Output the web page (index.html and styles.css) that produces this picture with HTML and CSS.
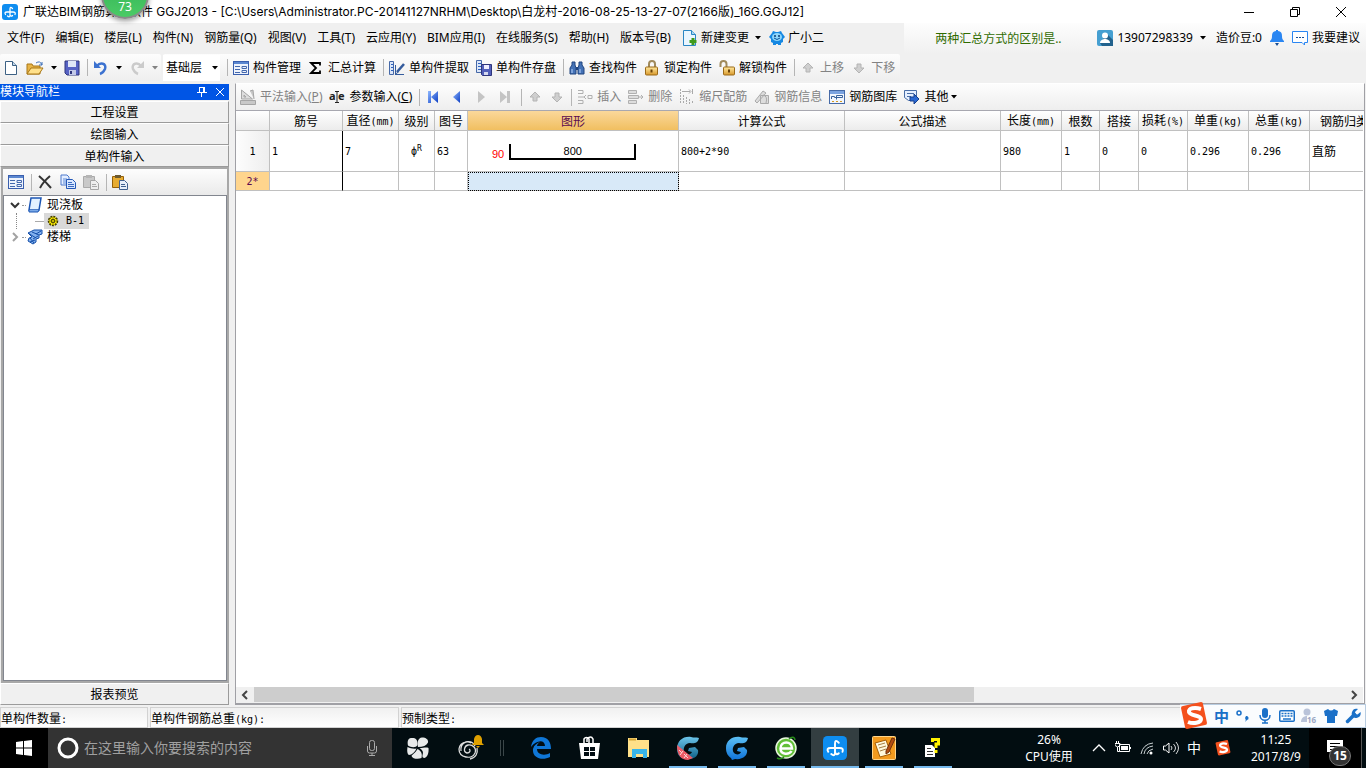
FILE: index.html
```html
<!DOCTYPE html>
<html lang="zh-CN">
<head>
<meta charset="utf-8">
<title>广联达BIM钢筋算量软件 GGJ2013</title>
<link rel="stylesheet" href="styles.css">
</head>
<body>
<svg class="defs" aria-hidden="true">
  <defs>
    <linearGradient id="gBlue" x1="0" y1="0" x2="1" y2="1"><stop offset="0" stop-color="#8fb8ff"/><stop offset="1" stop-color="#0d3fc4"/></linearGradient>
    <linearGradient id="gGold" x1="0" y1="0" x2="0" y2="1"><stop offset="0" stop-color="#ffe9a0"/><stop offset="1" stop-color="#d9982a"/></linearGradient>
    <linearGradient id="gSwirl" x1="0" y1="0" x2="0" y2="1"><stop offset="0" stop-color="#5cc0f5"/><stop offset="1" stop-color="#0f72d8"/></linearGradient>
    <linearGradient id="gTeal" x1="0" y1="0" x2="0" y2="1"><stop offset="0" stop-color="#6cc4ea"/><stop offset="1" stop-color="#0d5f86"/></linearGradient>
    <symbol id="logo" viewBox="0 0 16 16"><rect width="16" height="16" rx="3" fill="#0e8df0"/><path d="M10.500 4.500Q8 2 8 5v6q0 3-2.500 1M3.500 10.500Q2 8 5 8h6q3 0 2 2.500M10.500 11.500Q9 13 8 11" fill="none" stroke="#fff" stroke-width="1.300" stroke-linecap="round"/></symbol>
    <symbol id="form" viewBox="0 0 16 16"><rect x=".5" y="1.500" width="15" height="13" fill="#eef3fc" stroke="#3a5fae"/><path d="M1 3h14" stroke="#5b87d0" stroke-width="2"/><path d="M2 6.500h5M2 9.500h5M2 12.500h5" stroke="#4468ad"/><path d="M9 6.500h4.500v2H9zM9 10.500h4.500v2H9z" fill="none" stroke="#4468ad"/></symbol>
    <symbol id="up" viewBox="0 0 16 16"><path d="M8 3l5 5h-3v4H6V8H3z" fill="#cfcfcf" stroke="#b4b4b4"/></symbol>
    <symbol id="down" viewBox="0 0 16 16"><path d="M8 13l5-5h-3V4H6v4H3z" fill="#cfcfcf" stroke="#b4b4b4"/></symbol>
    <symbol id="caret" viewBox="0 0 6 4"><path d="M0 0h6L3 3.500z" fill="currentColor"/></symbol>
    <symbol id="lock" viewBox="0 0 16 16"><path d="M5 8V4a3 3 0 0 1 6 0v4" fill="none" stroke="#a08a5c" stroke-width="2"/><rect x="1.500" y="7" width="12" height="8" rx="1" fill="url(#gGold)" stroke="#9b6a18"/><path d="M7.500 9.500v3" stroke="#6a4208" stroke-width="2"/></symbol>
    <symbol id="copy" viewBox="0 0 16 16"><path d="M1 1h6l2 2v8H1z" fill="#e4eeff" stroke="#4c79cc"/><path d="M3 5h4M3 7h4M3 9h3" stroke="#5d89d6"/><path d="M6.500 5.500h6l3 3v6h-9z" fill="#d8e7ff" stroke="#2559b7"/><path d="M8 8.500h4M8 10.500h6M8 12.500h6" stroke="#3c6bc0"/></symbol>
    <symbol id="sogou" viewBox="0 0 28 28"><path d="M1 6Q1 4 3 4L21 0q2 0 2 2l4 19q0 2-2 2L7 27q-2 0-2-2z" fill="#f4511e"/><path d="M21 7C15 5 8 6 9 10s12 3 12 7-8 5-13 3" fill="none" stroke="#fff" stroke-width="4"/></symbol>
  </defs>
</svg>

<div class="app">
  <header class="titlebar">
    <svg class="ic16" viewBox="0 0 16 16"><use href="#logo"/></svg>
    <h1 class="title">广联达BIM钢筋算量软件 GGJ2013 - [C:\Users\Administrator.PC-20141127NRHM\Desktop\白龙村-2016-08-25-13-27-07(2166版)_16G.GGJ12]</h1>
    <div class="winctl">
      <button aria-label="最小化"><svg class="ic12" viewBox="0 0 12 12"><path d="M1 6.500h10" stroke="#000"/></svg></button>
      <button aria-label="还原"><svg class="ic12" viewBox="0 0 12 12"><path d="M1.500 3.500h7v7h-7zM3.500 3V1.500h7v7H9" fill="none" stroke="#000"/></svg></button>
      <button aria-label="关闭"><svg class="ic12" viewBox="0 0 12 12"><path d="M1 1l10 10M11 1L1 11" stroke="#000"/></svg></button>
    </div>
    <div class="orb"><span>73</span></div>
  </header>

  <nav class="menubar">
    <div class="menus">
      <button>文件(F)</button><button>编辑(E)</button><button>楼层(L)</button><button>构件(N)</button><button>钢筋量(Q)</button><button>视图(V)</button><button>工具(T)</button><button>云应用(Y)</button><button>BIM应用(I)</button><button>在线服务(S)</button><button>帮助(H)</button><button>版本号(B)</button>
      <button class="mi change"><svg class="ic16" viewBox="0 0 16 16"><path d="M1.500.5h8l4 4v11h-12z" fill="#eaf6ff" stroke="#2a86c4"/><path d="M9.500.5v4h4" fill="#a8d8f4" stroke="#2a86c4"/><path d="M11 8v7M7.500 11.500h7" stroke="#3f9b1c" stroke-width="3"/></svg>新建变更<svg class="caret" viewBox="0 0 6 4"><use href="#caret"/></svg></button>
      <button class="mi"><svg class="ic16" viewBox="0 0 16 16"><path d="M3 3l1-2 3 1h2l3-1 1 2 3 4-2 2v3l-2 1v2H9v-1H7v1H4v-2l-2-1V9L0 7z" fill="#1688e2"/><ellipse cx="8" cy="7" rx="5" ry="4" fill="#8fd6fb"/><path d="M6 5v2M10 5v2" stroke="#083c78" stroke-width="1.500"/><path d="M5 8q3 3 6 0" fill="none" stroke="#07529b"/></svg>广小二</button>
    </div>
    <a class="tip" href="#">两种汇总方式的区别是..</a>
    <div class="account">
      <button class="mi"><svg class="ic16" viewBox="0 0 16 16"><rect width="16" height="16" rx="2" fill="#459fd1"/><path d="M10 4l6 6v6H5l-2-3z" fill="#22628d"/><circle cx="8" cy="5.500" r="3" fill="#fff"/><path d="M3 13c0-3 3-4 5-4s5 1 5 4z" fill="#fff"/></svg>13907298339<svg class="caret" viewBox="0 0 6 4"><use href="#caret"/></svg></button>
      <span>造价豆:0</span>
      <button aria-label="通知"><svg class="ic16" viewBox="0 0 16 16"><path d="M7 0h2v1c3 .5 4 2 4 5 0 3 .5 3.500 2 5v1H1v-1c1.500-1.500 2-2 2-5 0-3 1-4.500 4-5z" fill="#2a86f2"/><path d="M6 13h4l-2 3z" fill="#174e96"/></svg></button>
      <button class="mi"><svg class="ic16" viewBox="0 0 16 16"><path d="M.5 1.500h15v11h-3V15L10 12.500H.5z" fill="#fff" stroke="#2a86f2"/><path d="M4 7.500h2M7 7.500h2M10 7.500h2" stroke="#174e96"/></svg>我要建议</button>
    </div>
  </nav>

  <div class="toolbars">
    <div class="toolbar files">
      <button aria-label="新建"><svg class="ic16" viewBox="0 0 16 16"><path d="M2.500 1.500h7l4 4v9h-11z" fill="#fff" stroke="#3d6184"/><path d="M9.500 1.500v4h4" fill="#c2d7ea" stroke="#3d6184"/></svg></button>
      <button aria-label="打开"><svg class="ic18" viewBox="0 0 18 16"><path d="M1 14V4h5l1 2h7v8z" fill="#e8b446" stroke="#a87717"/><path d="M1 14l4-6h12l-4 6z" fill="#ffe08a" stroke="#a87717"/><path d="M10 3q4-3 6 2M16 2v3h-3" fill="none" stroke="#3f71b8"/></svg></button>
      <button aria-label="打开选项"><svg class="caret" viewBox="0 0 6 4"><use href="#caret"/></svg></button>
      <button aria-label="保存"><svg class="ic16" viewBox="0 0 16 16"><path d="M1 1h14v14H3l-2-2z" fill="#5662c4" stroke="#2e357c"/><path d="M4 1h8v6H4z" fill="#dfe6f7"/><path d="M5 10h7v5H5z" fill="#c3c9e8"/><path d="M6 11h2v3H6z" fill="#2e357c"/></svg></button>
      <i class="sep"></i>
      <button aria-label="撤销"><svg class="ic16" viewBox="0 0 16 16"><path d="M4 6c3-4 10-3 8 3-1 2-2 4-5 5" fill="none" stroke="#3c72d0" stroke-width="2.500"/><path d="M1 1v7h7z" fill="#3c72d0"/></svg></button>
      <button aria-label="撤销选项"><svg class="caret" viewBox="0 0 6 4"><use href="#caret"/></svg></button>
      <button aria-label="重做" disabled><svg class="ic16" viewBox="0 0 16 16"><path d="M12 6C9 2 2 3 4 9c1 2 2 4 5 5" fill="none" stroke="#cbcbcb" stroke-width="2.500"/><path d="M15 1v7H8z" fill="#cbcbcb"/></svg></button>
      <button aria-label="重做选项" disabled><svg class="caret" viewBox="0 0 6 4"><use href="#caret"/></svg></button>
    </div>
    <div class="toolbar">
      <label class="floor"><select aria-label="楼层"><option>基础层</option></select><svg class="caret" viewBox="0 0 6 4"><use href="#caret"/></svg></label>
      <i class="sep"></i>
      <button><svg class="ic16" viewBox="0 0 16 16"><use href="#form"/></svg>构件管理</button>
      <button><svg class="ic16" viewBox="0 0 16 16"><path d="M12 5.500V3H3l5 5-5 5h9v-2.500" fill="none" stroke="#000" stroke-width="1.800"/></svg>汇总计算</button>
      <i class="sep"></i>
      <button><svg class="ic16" viewBox="0 0 16 16"><path d="M.5 1.500h4v13h-4z" fill="#dbe6f8" stroke="#4669a8"/><path d="M2 4.500h2M2 7.500h2M2 10.500h2" stroke="#2d62c0"/><path d="M6 14.500h9" stroke="#345b9d"/><path d="M8 12l7-8" stroke="#345b9d" stroke-width="2.500"/><path d="M6.500 5v9l3-2" fill="none" stroke="#345b9d"/></svg>单构件提取</button>
      <button><svg class="ic16" viewBox="0 0 16 16"><path d="M.5.5h5v12h-5z" fill="#dbe6f8" stroke="#4669a8"/><path d="M2 3.500h3M2 6.500h3M2 9.500h3" stroke="#2d62c0"/><path d="M5.500 4.500h10v11h-9l-1-1z" fill="#5360bb" stroke="#2e357c"/><path d="M8 5h5v4H8z" fill="#eef"/><path d="M8 12h4v3H8z" fill="#d6daf0"/></svg>单构件存盘</button>
      <i class="sep"></i>
      <button><svg class="ic16" viewBox="0 0 16 16"><path d="M3 2h3v3l1 3v6H1V8l2-3zM10 2h3v3l2 3v6H9V8l1-3z" fill="#4472b6" stroke="#20447f"/><path d="M7 7h2v3H7z" fill="#20447f"/><path d="M3 9v4M11 9v4" stroke="#b8d4ff"/></svg>查找构件</button>
      <button><svg class="ic16" viewBox="0 0 16 16"><use href="#lock"/></svg>锁定构件</button>
      <button><svg class="ic16" viewBox="0 0 16 16"><path d="M1.500 7V4a3 3 0 0 1 6 0v4" fill="none" stroke="#a08a5c" stroke-width="2"/><rect x="4.500" y="7" width="11" height="8" rx="1" fill="url(#gGold)" stroke="#9b6a18"/><path d="M10 9.500v3" stroke="#6a4208" stroke-width="2"/></svg>解锁构件</button>
      <i class="sep"></i>
      <button disabled><svg class="ic16" viewBox="0 0 16 16"><use href="#up"/></svg>上移</button>
      <button disabled><svg class="ic16" viewBox="0 0 16 16"><use href="#down"/></svg>下移</button>
    </div>
  </div>

  <div class="workspace">
    <aside class="sidebar">
      <div class="side-head"><h2>模块导航栏</h2>
        <button aria-label="固定"><svg class="ic12" viewBox="0 0 12 12"><path d="M3.500 1v5.500M3 1.500h5M7.500 1v5.500M8.500 1v5.500M1 6.500h10M5.500 7v4" stroke="#fff" fill="none"/></svg></button>
        <button aria-label="关闭"><svg class="ic12" viewBox="0 0 12 12"><path d="M2 2l8 8M10 2l-8 8" stroke="#fff"/></svg></button>
      </div>
      <button class="module">工程设置</button>
      <button class="module">绘图输入</button>
      <button class="module">单构件输入</button>
      <div class="panel">
        <div class="panel-tools">
          <button aria-label="构件管理"><svg class="ic16" viewBox="0 0 16 16"><use href="#form"/></svg></button>
          <i class="sep"></i>
          <button aria-label="删除"><svg class="ic16" viewBox="0 0 16 16"><path d="M2 2q7 6 12 12M13 2Q6 8 3 14" fill="none" stroke="#333" stroke-width="2"/></svg></button>
          <button aria-label="复制"><svg class="ic16" viewBox="0 0 16 16"><use href="#copy"/></svg></button>
          <button aria-label="粘贴" disabled><svg class="ic16" viewBox="0 0 16 16"><path d="M.5 2.500h11v11H.5z" fill="#c9c9c9" stroke="#aaa"/><path d="M3 1h6v3H3z" fill="#b5b5b5"/><path d="M7.500 6.500h5l3 3v6h-8z" fill="#efefef" stroke="#a6a6a6"/><path d="M9 10.500h4M9 12.500h5" stroke="#aaa"/></svg></button>
          <i class="sep"></i>
          <button aria-label="粘贴构件"><svg class="ic16" viewBox="0 0 16 16"><path d="M.5 2.500h11v11H.5z" fill="#e7ac32" stroke="#94600a"/><path d="M3 1h6v3H3z" fill="#6d5a2e"/><path d="M7.500 6.500h5l3 3v6h-8z" fill="#e8f0fb" stroke="#42618f"/><path d="M9 10.500h4M9 12.500h5" stroke="#42618f"/></svg></button>
        </div>
        <ul class="tree">
          <li class="node"><svg class="twist" viewBox="0 0 12 12"><path d="M2 4l4 4 4-4" fill="none" stroke="#333" stroke-width="2"/></svg><i class="dots"></i><svg class="ic16" viewBox="0 0 16 16"><path d="M4 1h10l-2 12H2z" fill="#e3f1ff" stroke="#1c56b4" stroke-width="1.500"/><path d="M2 13v2h9l1-2" fill="#7baae8" stroke="#1c56b4"/></svg><span>现浇板</span></li>
          <li class="node child"><i class="elbow"></i><span class="picked"><svg class="ic12" viewBox="0 0 12 12"><circle cx="6" cy="6" r="4.500" fill="#fff000" stroke="#413b00" stroke-width="1.500" stroke-dasharray="2 1"/><path d="M6 2v8M2 6h8M3 3l6 6M9 3L3 9" stroke="#817800"/><circle cx="6" cy="6" r="1.500" fill="#fff000" stroke="#413b00"/></svg><span class="mono">B-1</span></span></li>
          <li class="node"><svg class="twist" viewBox="0 0 12 12"><path d="M4 2l4 4-4 4" fill="none" stroke="#a2a2a2" stroke-width="2"/></svg><i class="dots"></i><svg class="ic16" viewBox="0 0 16 16"><path d="M1 4l6-3 8 0 0 4-3 1v3l-3 1v3l-3 2-5-3 1-3 3-1z" fill="#82b1ef" stroke="#154fa9"/><path d="M5 3l7 3M1 4l8 5M3 9l4 5M14 2l-5 3M11 7L6 10M8 11l-5 2" fill="none" stroke="#154fa9"/></svg><span>楼梯</span></li>
        </ul>
      </div>
      <button class="module">报表预览</button>
    </aside>

    <main class="editor">
      <div class="toolbar sub">
        <button disabled><svg class="ic16" viewBox="0 0 16 16"><path d="M1.500 1v9h11zM4 6v2h2z" fill="#ddd" stroke="#a5a5a5"/><path d="M.5 11.500h15v4H.5zM10 2l3-1 1 9" fill="#c8c8c8" stroke="#a5a5a5"/></svg><span>平法输入(<u>P</u>)</span></button>
        <button><svg class="ic16" viewBox="0 0 16 16"><text x="0" y="11" class="ae">a</text><text x="9" y="11" class="ae">e</text><path d="M6 2.500h4M8 2.500v11M6 13.500h4" stroke="#222"/></svg><span>参数输入(<u>C</u>)</span></button>
        <i class="sep"></i>
        <button class="step" aria-label="首条"><svg class="ic16" viewBox="0 0 16 16"><path d="M3 2h3v12H3zM13 2v12L6 8z" fill="url(#gBlue)"/></svg></button>
        <button class="step" aria-label="上一条"><svg class="ic16" viewBox="0 0 16 16"><path d="M11 2v12L4 8z" fill="url(#gBlue)"/></svg></button>
        <button class="step" aria-label="下一条" disabled><svg class="ic16" viewBox="0 0 16 16"><path d="M5 2v12l7-6z" fill="#c4c4c4"/></svg></button>
        <button class="step" aria-label="末条" disabled><svg class="ic16" viewBox="0 0 16 16"><path d="M3 2v12l7-6zM10 2h3v12h-3z" fill="#c4c4c4"/></svg></button>
        <i class="sep"></i>
        <button class="move" aria-label="上移" disabled><svg class="ic16" viewBox="0 0 16 16"><use href="#up"/></svg></button>
        <button class="move" aria-label="下移" disabled><svg class="ic16" viewBox="0 0 16 16"><use href="#down"/></svg></button>
        <i class="sep"></i>
        <button disabled><svg class="ic16" viewBox="0 0 16 16"><path d="M1 1.500h5v3H1M1 11.500h5v3H1M1 8h7M11 6.500h4v3h-4zM7 8l2-2M7 8l2 2" fill="none" stroke="#b0b0b0"/></svg>插入</button>
        <button disabled><svg class="ic16" viewBox="0 0 16 16"><path d="M.5 1.500h8v3h-8zM.5 6.500h10v3H.5zM.5 11.500h8v3h-8z" fill="#ddd" stroke="#b0b0b0"/><path d="M10 8h5M13 6l2 2-2 2" fill="none" stroke="#b0b0b0"/></svg>删除</button>
        <button disabled><svg class="ic16" viewBox="0 0 16 16"><path d="M1.500 0v15M4.500 6v9M7.500 8v7M10.500 10v5M13.500 12v3" stroke="#aaa" stroke-dasharray="2 1"/><path d="M3 2.500h8M10 .5l2 2-2 2M13.500 0v5" fill="none" stroke="#aaa"/></svg>缩尺配筋</button>
        <button disabled><svg class="ic16" viewBox="0 0 16 16"><path d="M1 12L9 2l3 2-9 10zM6.500 6.500h8v8h-8z" fill="#ddd" stroke="#aaa"/><path d="M9 6q5 1 3 8" fill="none" stroke="#aaa"/></svg>钢筋信息</button>
        <button><svg class="ic16" viewBox="0 0 16 16"><rect x=".5" y="1.500" width="15" height="13" fill="#f2f6fd" stroke="#466aa7"/><path d="M1 3.500h14" stroke="#7ba3e0" stroke-width="3"/><path d="M2.500 10V7.500h3v1h8V6.500h-6v4" fill="none" stroke="#38629d"/><path d="M3 12.500h2M7 12.500h2M11 12.500h2" stroke="#d49a22"/></svg>钢筋图库</button>
        <button><svg class="ic16" viewBox="0 0 16 16"><path d="M.5 1.500h12v10h-8l-4-3z" fill="#e5efff" stroke="#486da6"/><path d="M3 4.500h7M3 7.500h4" stroke="#486da6"/><path d="M6 8h4V5l5 5-5 5v-3H6z" fill="#2a68d1" stroke="#153f8d"/></svg>其他<svg class="caret tight" viewBox="0 0 6 4"><use href="#caret"/></svg></button>
      </div>
      <div class="grid-wrap">
        <table class="grid">
          <colgroup><col class="w34"><col class="w73"><col class="w56"><col class="w36"><col class="w33"><col class="w211"><col class="w166"><col class="w156"><col class="w61"><col class="w38"><col class="w39"><col class="w49"><col class="w61"><col class="w61"><col></colgroup>
          <thead>
            <tr><th></th><th>筋号</th><th>直径<b>(mm)</b></th><th>级别</th><th>图号</th><th class="hot">图形</th><th>计算公式</th><th>公式描述</th><th>长度<b>(mm)</b></th><th>根数</th><th>搭接</th><th>损耗<b>(%)</b></th><th>单重<b>(kg)</b></th><th>总重<b>(kg)</b></th><th class="cut">钢筋归类</th></tr>
          </thead>
          <tbody>
            <tr class="tall"><th>1</th><td class="frozen">1</td><td>7</td><td class="mid">ф<sup>R</sup></td><td>63</td>
              <td class="shape"><div class="bar"><span class="hook">90</span><span class="span">800</span></div></td>
              <td>800+2*90</td><td></td><td>980</td><td>1</td><td>0</td><td>0</td><td>0.296</td><td>0.296</td><td class="cn">直筋</td></tr>
            <tr><th class="current">2*</th><td class="frozen"></td><td></td><td></td><td></td><td class="focus"></td><td></td><td></td><td></td><td></td><td></td><td></td><td></td><td></td><td></td></tr>
          </tbody>
        </table>
      </div>
      <div class="hscroll">
        <button aria-label="向左"><svg class="ic12" viewBox="0 0 12 12"><path d="M8 2L4 6l4 4" fill="none" stroke="#444" stroke-width="2"/></svg></button>
        <div class="track"><div class="thumb"></div></div>
        <button aria-label="向右"><svg class="ic12" viewBox="0 0 12 12"><path d="M4 2l4 4-4 4" fill="none" stroke="#444" stroke-width="2"/></svg></button>
      </div>
    </main>
  </div>

  <footer class="status">
    <span class="s-count">单构件数量<b>:</b></span><span class="s-total">单构件钢筋总重<b>(kg):</b></span><span class="s-type">预制类型<b>:</b></span>
    <div class="ime">
      <svg class="ic28" viewBox="0 0 28 28"><use href="#sogou"/></svg>
      <button class="lang">中</button>
      <svg class="ic16" viewBox="0 0 16 16"><circle cx="4" cy="5" r="2" fill="none" stroke="#1a70c8" stroke-width="1.500"/><path d="M11 8a2 2 0 1 1 1 4l-2 2c1-2 1-2 0-4z" fill="#1a70c8"/></svg>
      <svg class="ic16" viewBox="0 0 16 16"><rect x="5" y="0" width="6" height="10" rx="3" fill="#1a70c8"/><path d="M3 7c0 7 10 7 10 0M8 12v3M5 15h6" fill="none" stroke="#1a70c8" stroke-width="1.500"/></svg>
      <svg class="ic16" viewBox="0 0 16 16"><rect x=".75" y="2.750" width="14.500" height="10.500" rx="1" fill="#fff" stroke="#1a70c8" stroke-width="1.500"/><path d="M2.500 5.500h11M2.500 8h11" stroke="#1a70c8" stroke-width="1.500" stroke-dasharray="2 1"/><path d="M4 11h8" stroke="#1a70c8" stroke-width="1.500"/></svg>
      <svg class="ic16" viewBox="0 0 16 16"><circle cx="6" cy="4" r="3.500" fill="#b9c3d9"/><path d="M0 14c0-8 12-8 12 0z" fill="#b9c3d9"/><path d="M6 8h10v8H6z" fill="#fafcfe"/><text x="6" y="15" class="num16">16</text></svg>
      <svg class="ic16" viewBox="0 0 16 16"><path d="M1 3l4-2q3 3 6 0l4 2-1 5h-2v7H4V8H2z" fill="#1a70c8"/></svg>
      <svg class="ic16" viewBox="0 0 16 16"><path d="M2.500 13.500l7-7" stroke="#1a70c8" stroke-width="3.500" stroke-linecap="round"/><path d="M13 1l-3 3 .5 2 2 .5L15.500 4c1 4-2 6-5 6S6 7 7 4s3-4 6-3z" fill="#1a70c8"/></svg>
    </div>
  </footer>

  <footer class="taskbar">
    <button class="start" aria-label="开始"><svg class="ic16" viewBox="0 0 16 16"><path d="M0 2l7-1v6.500H0zM8 1l8-1v7.500H8zM0 8.500h7V15l-7-1zM8 8.500h8V16l-8-1z" fill="#fff"/></svg></button>
    <label class="search"><svg class="ic22" viewBox="0 0 22 22"><circle cx="11" cy="11" r="9" fill="none" stroke="#fff" stroke-width="3"/></svg><input type="text" placeholder="在这里输入你要搜索的内容" aria-label="搜索"><svg class="ic16" viewBox="0 0 16 16"><rect x="5.500" y=".5" width="5" height="10" rx="2" fill="none" stroke="#ababab"/><path d="M3.500 6v5q0 2 2 2h5q2 0 2-2V6M8 13v2.500M5 15.500h6" fill="none" stroke="#ababab"/></svg></label>
    <div class="quick">
      <button aria-label="浏览器"><svg class="ic24" viewBox="0 0 24 24"><g fill="#e8eaea"><path d="M11.500 9C10 12 5 11.500 2 9.500 1 6 2 2 5 2c4-.5 7 1 6.500 7z"/><path d="M12 11C11 6 12 2 16 1.500c4 0 6.500 2 6 5-1.500 3-5 4.500-10 4.500z"/><path d="M13.500 12c4 0 7-1 9 0 .5 5-1 9-4 10-3 0-2-3-1.500-5 0-2-1.500-4-3.500-5z"/><path d="M11.500 13c4 2 5 5 4 9-3 1.500-9 1-10-2 1-2 4-3 6-7z"/><path d="M1.500 11c3 1.500 6 2 9 1.500C9 16 6 19 3 19c-2-1-2-5-1.500-8z"/></g></svg></button>
      <button aria-label="提醒"><svg class="ic28" viewBox="0 0 28 28"><path d="M19 12c-3-7-15-5-16 3 0 9 13 11 16 4 2-5-3-9-7-8-4 1-5 7-1 8 3 0 4-3 2-4M14 25c6-1 8-6 7-11M5 17C4 9 11 6 15 9" fill="none" stroke="#ddd" stroke-width="1.300"/><path d="M16 11l2-2V5q1-4 4-4t4 4v4l2 2zM20 12h4l-2 2z" fill="#dfa000"/></svg></button>
      <i class="grip"></i>
    </div>
    <div class="apps">
      <button aria-label="Edge"><svg class="ic24" viewBox="0 0 24 24"><path d="M2 11C3 4 7 1 12 1c7 0 10 5 10 12H8c0 6 8 7 13 4v4C13 25 3 22 4 13c1-4 4-6 7-7-2 1-3 3-3 4h8c0-7-9-6-14 1z" fill="#0f76d6"/></svg></button>
      <button aria-label="应用商店"><svg class="ic24" viewBox="0 0 24 24"><path d="M1 7h21l-2 16H3z" fill="#fff"/><path d="M6 7V3q2-3 5 0v4M9 6V3q4-4 6 0v4" fill="none" stroke="#fff" stroke-width="1.500"/><path d="M6 11h5v4H6zM12 11h5v4h-5zM6 16h5v4H6zM12 16h5v4h-5z" fill="#020d13"/></svg></button>
      <button aria-label="文件资源管理器"><svg class="ic24" viewBox="0 0 24 24"><path d="M1 2h9v2h12v17H1z" fill="#ffe089"/><path d="M2 3.500h7" stroke="#d7a635" stroke-width="2"/><path d="M5 13h15v9h-4v-4H9v4H5z" fill="#39b5ea"/></svg></button>
      <button class="run" aria-label="广联达工具"><svg class="ic24" viewBox="0 0 24 24"><path d="M23 2c-3-1-5 0-8-1C7 0 1 5 1 13s6 11 12 10c6 0 10-4 9-9l-3-3-6 1-1 3 4 1c-1 3-5 3-7 1-3-4 0-10 5-10 4 1 8 0 9-5z" fill="url(#gTeal)"/><path d="M1 9l16 13-5 2C5 24 1 19 1 9z" fill="#ec5b66"/><path d="M3 14l3 3M7 15l-3 4M8 18l4 4M11 18l-3 4" stroke="#fbd6d8"/></svg></button>
      <button class="run" aria-label="广联达"><svg class="ic24" viewBox="0 0 24 24"><path d="M23 2c-3-1-5 0-8-1C7 0 1 5 1 12c0 5 2 8 5 10l1 2 3-1c8 1 13-4 12-9l-3-3-6 1-1 3 4 1c-1 3-5 3-7 1-3-4 0-10 5-10 4 1 8 0 9-5z" fill="url(#gSwirl)"/></svg></button>
      <button class="run" aria-label="绿色浏览器"><svg class="ic24" viewBox="0 0 24 24"><circle cx="12" cy="12" r="10" fill="#62bf38" stroke="#e9f8df" stroke-width="1.500"/><path d="M7 12.500h11c0-8-11.500-8-11.500 0 0 7 9 6 11 2.500" fill="none" stroke="#fff" stroke-width="2.500"/><path d="M3 22c4 2 7-1 7-1M15 3c3-3 6-2 6 1" fill="none" stroke="#278b18" stroke-width="1.500"/></svg></button>
      <button class="run active" aria-label="广联达BIM钢筋算量软件"><svg class="ic24" viewBox="0 0 16 16"><use href="#logo"/></svg></button>
      <button class="run" aria-label="记事"><svg class="ic24" viewBox="0 0 24 24"><rect x=".5" y=".5" width="23" height="23" rx="1" fill="#f29a1e" stroke="#ffd58a"/><path d="M3 7l11-3 5 14-11 3z" fill="#fff8dc" stroke="#a55d05"/><path d="M6 9l7-2M7 12l7-2M8 15l6-2" stroke="#a68045"/><path d="M14 15l6-13 3 1-6 13-3 2z" fill="#b34d12" stroke="#70310a"/></svg></button>
      <button class="run" aria-label="帮助"><svg class="ic24" viewBox="0 0 24 24"><path d="M4 9h7l3 3v9H4z" fill="#fff"/><path d="M6 12.500h4M6 15.500h6M6 18.500h6" stroke="#333"/><path d="M11.500 6V3.500h6V8H15v4M15 14v3" fill="none" stroke="#fff200" stroke-width="3"/></svg></button>
    </div>
    <div class="tray">
      <div class="two cpu"><span>26%</span><span>CPU使用</span></div>
      <button aria-label="显示隐藏的图标"><svg class="ic16" viewBox="0 0 16 16"><path d="M2 11l6-6 6 6" fill="none" stroke="#fff" stroke-width="1.300"/></svg></button>
      <button aria-label="电池"><svg class="ic16" viewBox="0 0 16 16"><path d="M4.500 4.500h10v7h-10zM15.500 7v2M0 3.500h5v2q-2 3-5 0zM1.500 1v2M3.500 1v2M2.500 7v4.500h2" fill="none" stroke="#fff"/><path d="M6 6h7v4H6z" fill="#fff"/></svg></button>
      <button aria-label="网络"><svg class="ic16" viewBox="0 0 16 16"><path d="M2 14Q4 4 14 3M5 14q1-7 9-8M8 14q1-4 6-5" fill="none" stroke="#c9d0d2"/><circle cx="12" cy="13" r="1.500" fill="#fff"/></svg></button>
      <button aria-label="音量"><svg class="ic16" viewBox="0 0 16 16"><path d="M.5 6v4h2L6 13V3L2.500 6z" fill="none" stroke="#fff"/><path d="M8 6q2 2 0 4M10.500 4q4 4 0 8M13 2q5 6 0 12" fill="none" stroke="#d7dadb"/></svg></button>
      <button class="cn14">中</button>
      <button class="sg" aria-label="搜狗输入法"><svg class="ic16" viewBox="0 0 28 28"><use href="#sogou"/></svg></button>
      <div class="two clock"><span>11:25</span><span>2017/8/9</span></div>
      <button class="notes" aria-label="通知中心"><svg class="ic16" viewBox="0 0 16 16"><path d="M0 0h16v12H9l-3 3v-3H0z" fill="#fff"/><path d="M3 3.500h10M3 6.500h10M3 9.500h6" stroke="#000"/></svg><span class="badge">15</span></button>
    </div>
  </footer>
</div>
</body>
</html>
```
FILE: styles.css
```css
* { box-sizing: border-box; }
body { margin: 0; font: 12px/16px "Noto Sans", "Noto Sans CJK SC", sans-serif; color: #000; background: #f0f0f0; }
button { border: 0; padding: 0; margin: 0; background: none; font: inherit; color: inherit; display: flex; align-items: center; white-space: nowrap; }
h1, h2 { margin: 0; font: inherit; }
svg { display: block; flex: none; }
b { font: 10px/16px "DejaVu Sans Mono", monospace; }
.defs { position: absolute; width: 0; height: 0; }
.ic12 { width: 12px; height: 12px; }
.ic16 { width: 16px; height: 16px; }
.ic18 { width: 18px; height: 16px; }
.ic22 { width: 22px; height: 22px; }
.ic24 { width: 24px; height: 24px; }
.ic28 { width: 28px; height: 28px; }
.caret { width: 6px; height: 4px; }
.mono { font: 10px/16px "DejaVu Sans Mono", monospace; }

.app { height: 100vh; display: flex; flex-direction: column; overflow: hidden; }

.titlebar { position: relative; height: 23px; flex: none; display: flex; align-items: center; gap: 5px; padding-left: 2px; background: #fff; }
.title { flex: 1; white-space: nowrap; overflow: hidden; font-family: Inter, "Noto Sans CJK SC", sans-serif; }
.winctl { display: flex; gap: 34px; padding-right: 19px; }
.orb { position: absolute; left: 101px; top: -29px; width: 48px; height: 48px; border-radius: 50%; border: 2px solid #8b8b8b; background: linear-gradient(#2fae52, #4bcb66); box-shadow: 0 2px 5px rgba(0,0,0,.4); color: #fff; display: flex; align-items: flex-end; justify-content: center; padding-bottom: 4px; font-size: 12px; line-height: 12px; }

.menubar { height: 31px; flex: none; display: flex; }
.menus { flex: 1; display: flex; align-items: center; gap: 11px; padding: 0 0 2px 7px; white-space: nowrap; }
.mi { gap: 3px; }
.mi .caret { margin: 0 3px; }
.menus .change .caret { margin: 0 -3px 0 3px; }
.tip { width: 188px; display: flex; align-items: center; justify-content: center; background: linear-gradient(#fdfdfd, #f0f0f0); color: #2f6b00; text-decoration: none; }
.account { display: flex; align-items: center; gap: 7px; padding: 0 6px 2px 5px; background: linear-gradient(#fdfdfd, #f0f0f0); white-space: nowrap; }
.account .mi { gap: 4px; }

.toolbars { height: 29px; flex: none; display: flex; gap: 2px; padding-bottom: 2px; }
.toolbar { display: flex; align-items: center; gap: 7px; padding: 0 5px 0 0; background: linear-gradient(#fdfdfd, #eee); border-radius: 2px; }
.toolbar button { gap: 4px; }
.toolbar button:disabled { color: #838383; }
.sep { width: 1px; height: 17px; margin-right: -2px; background: #b5b5b5; flex: none; }
.files { padding: 0 3px; }
.floor { display: flex; align-items: center; width: 57px; height: 26px; background: #fff; padding-left: 3px; }
.floor select { appearance: none; border: 0; padding: 0; width: 47px; background: none; font: inherit; }
.floor .caret { margin-right: 2px; }

.workspace { flex: 1; min-height: 0; display: flex; gap: 6px; }
.sidebar { width: 229px; flex: none; display: flex; flex-direction: column; padding-top: 1px; }
.side-head { display: flex; align-items: center; gap: 6px; height: 16px; margin-bottom: 1px; flex: none; padding-right: 3px; background: #0055e5; color: #fff; }
.side-head h2 { flex: 1; }
.module { height: 22px; flex: none; justify-content: center; padding-top: 1px; border: 1px solid; border-color: #fff #9b9b9b #9b9b9b #fff; background: #f0f0f0; }
.panel { flex: 1; min-height: 0; margin-left: 1px; display: flex; flex-direction: column; border: 2px solid #a8a8a8; background: #f0f0f0; }
.panel-tools { display: flex; align-items: center; gap: 7px; height: 26px; flex: none; padding-left: 5px; background: linear-gradient(#fdfdfd, #eaeaea); }
.tree { flex: 1; margin: 0; padding: 1px 0; list-style: none; border: 1px solid #82868f; background: #fff; }
.node { display: flex; align-items: center; height: 16px; padding-left: 5px; }
.node > span { margin-left: 4px; }
.twist { width: 12px; height: 12px; }
.dots { width: 4px; margin: 0 1px; border-top: 1px dotted #999; }
.node .picked { display: flex; align-items: center; gap: 7px; margin: 0; height: 16px; padding: 0 5px 0 3px; background: #d9d9d9; }
.child { padding-left: 12px; }
.elbow { width: 28px; height: 16px; border-left: 1px dotted #888; background: linear-gradient(90deg, transparent 18px, #aaa 18px) center / 100% 1px no-repeat; }

.editor { flex: 1; min-width: 0; display: flex; flex-direction: column; margin-right: 1px; border: 1px solid #a0a0a5; border-top-color: #fff; border-width: 1px 1px 2px 1px; background: #fff; }
.sub { height: 27px; flex: none; padding-left: 4px; border-bottom: 1px solid #a8a8b0; border-radius: 0; }
.sub .step { width: 17px; }
.sub .move { width: 15px; justify-content: center; }
.sub .tight { margin-left: -1px; }
.ae { font: bold 11px "Noto Sans", sans-serif; fill: #222; }
.grid-wrap { flex: 1; min-height: 0; overflow: hidden; margin-right: 1px; }
.grid { width: 100%; table-layout: fixed; border-collapse: separate; border-spacing: 0; }
.grid th, .grid td { height: 19px; padding: 1px 2px 0; border-right: 1px solid #c0c0c0; border-bottom: 1px solid #c0c0c0; font-weight: normal; white-space: nowrap; overflow: hidden; line-height: 16px; }
.grid th { background: linear-gradient(90deg, #fdfdfd, #eee); text-align: center; padding: 1px 0 0; }
.grid thead th { height: 20px; padding-top: 2px; background: linear-gradient(#fff, #ececec); }
.grid td, .grid tbody th { font: 10px/16px "DejaVu Sans Mono", "Noto Sans CJK SC", monospace; }
.grid .tall td, .grid .tall th { height: 41px; }
.grid thead .hot { background: linear-gradient(#fad89b, #f1bf60); color: #5a0a50; }
.grid thead .cut { text-align: left; padding-left: 10px; border-right: 0; }
.grid td:last-child { border-right: 0; }
.grid .frozen { border-right-color: #000; }
.grid tbody .current { background: #ffd58d; color: #5a0a50; }
.grid .focus { background: #d8e9f8; outline: 1px dotted #000; outline-offset: -1px; }
.grid .mid { text-align: center; }
.grid .cn { font-size: 12px; }
sup { font-size: 8px; line-height: 8px; }
.bar { display: flex; align-items: flex-end; gap: 5px; padding-left: 22px; font: 11px/16px "Liberation Sans", sans-serif; }
.hook { color: #f00; line-height: 12px; }
.bar .span { width: 127px; height: 16px; border: 2px solid #000; border-top: 0; text-align: center; line-height: 14px; }
.w33 { width: 33px; } .w34 { width: 34px; } .w36 { width: 36px; } .w38 { width: 38px; } .w39 { width: 39px; } .w49 { width: 49px; } .w56 { width: 56px; } .w61 { width: 61px; } .w73 { width: 73px; } .w156 { width: 156px; } .w166 { width: 166px; } .w211 { width: 211px; }
.hscroll { height: 16px; flex: none; display: flex; margin-right: 1px; background: #f0f0f0; }
.hscroll button { width: 18px; justify-content: center; }
.track { flex: 1; }
.thumb { width: 66%; height: 15px; background: #cdcdcd; }

.status { position: relative; height: 23px; flex: none; display: flex; gap: 2px; padding-top: 2px; }
.status > span { border: 1px solid #d2d2d2; padding: 3px 0 0; line-height: 16px; background: linear-gradient(#f0f0f0, #fff); white-space: nowrap; }
.s-count { width: 148px; }
.s-total { width: 249px; }
.s-type { flex: 1; }
.ime { position: absolute; right: 0; bottom: 0; display: flex; align-items: center; gap: 6px; width: 186px; height: 24px; padding-right: 4px; background: #fafcfe; border: 1px solid #b8cce0; border-left: 0; }
.lang { font-weight: bold; font-size: 15px; color: #1a70c8; }
.num16 { font: bold 8px "Noto Sans", sans-serif; fill: #9aa7c4; }

.taskbar { height: 40px; flex: none; display: flex; background: #020d11; color: #fff; }
.taskbar button { justify-content: center; }
.start { width: 48px; background: #000; }
.search { width: 344px; display: flex; align-items: center; gap: 5px; padding: 0 12px 0 9px; background: #333; }
.search input { flex: 1; min-width: 0; border: 0; padding: 0; background: none; font: 14px/20px "Noto Sans", "Noto Sans CJK SC", sans-serif; color: #fff; }
.search input::placeholder { color: #a0a0a0; opacity: 1; }
.quick { display: flex; align-items: center; gap: 4px; padding-left: 2px; width: 125px; }
.quick button { width: 48px; height: 40px; flex: none; }
.grip { width: 4px; height: 16px; margin-left: 2px; border: 1px solid #3b4649; border-width: 0 1px; }
.apps { display: flex; gap: 1px; }
.apps button { width: 48px; height: 40px; }
.run { position: relative; }
.run::after { content: ""; position: absolute; left: 5px; right: 5px; bottom: 0; height: 2px; background: #76b9ed; }
.active { background: #333e41; }
.active::after { left: 0; right: 0; }
.tray { margin-left: auto; display: flex; align-items: center; gap: 8px; }
.two { display: flex; flex-direction: column; align-items: center; line-height: 17px; }
.cpu { margin-right: 10px; }
.cn14 { font-size: 14px; }
.sg { margin-left: 6px; }
.clock { margin-left: 12px; }
.notes { position: relative; width: 53px; height: 40px; background: #000; border-right: 1px solid #555; margin-right: 4px; }
.badge { position: absolute; right: 10px; bottom: 2px; width: 22px; height: 20px; border: 1px solid #777; border-radius: 10px; background: #333; font-size: 12px; font-weight: bold; line-height: 18px; text-align: center; }
```
